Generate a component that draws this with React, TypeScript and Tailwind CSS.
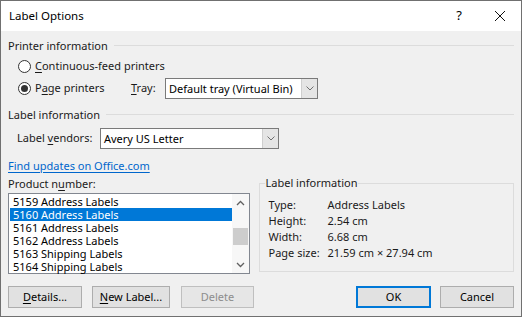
import React from "react";

const FONT = { fontFamily: '"Noto Sans", "Open Sans", sans-serif' };

function U({ children }: { children: React.ReactNode }) {
  return <span className="underline underline-offset-2">{children}</span>;
}

function Radio({ checked }: { checked?: boolean }) {
  return (
    <span className="flex h-[13px] w-[13px] shrink-0 items-center justify-center rounded-full border border-[#333] bg-white">
      {checked && <span className="h-[7px] w-[7px] rounded-full bg-[#333]" />}
    </span>
  );
}

function Chevron({ up }: { up?: boolean }) {
  return (
    <svg width="9" height="6" viewBox="0 0 9 6" className="shrink-0">
      <path
        d={up ? "M1 5 L4.5 1.5 L8 5" : "M1 1 L4.5 4.5 L8 1"}
        fill="none"
        stroke="#606060"
        strokeWidth="1.3"
      />
    </svg>
  );
}

function Combo({ value, width }: { value: string; width: string }) {
  return (
    <div className={`flex h-[21px] items-stretch border border-[#7a7a7a] bg-white ${width}`}>
      <span className="flex-1 whitespace-nowrap pl-[3px] leading-[19px] text-black">{value}</span>
      <span className="flex w-[16px] items-center justify-center border-l border-[#cfcfcf] bg-[#e5e5e5]">
        <svg width="8" height="5" viewBox="0 0 8 5">
          <path d="M0.5 0.5 L4 4 L7.5 0.5" fill="none" stroke="#707070" strokeWidth="1" />
        </svg>
      </span>
    </div>
  );
}

function Btn({
  children,
  width,
  primary,
  disabled,
}: {
  children: React.ReactNode;
  width: string;
  primary?: boolean;
  disabled?: boolean;
}) {
  return (
    <div
      className={`flex h-[22px] items-center justify-center whitespace-nowrap ${width} ${
        primary
          ? "border-2 border-[#0078d7] bg-[#e1e1e1] text-black"
          : disabled
          ? "border border-[#bfbfbf] bg-[#e6e6e6] text-[#8d8d8d]"
          : "border border-[#adadad] bg-[#e1e1e1] text-black"
      }`}
    >
      {children}
    </div>
  );
}

const PRODUCTS = [
  "5159 Address Labels",
  "5160 Address Labels",
  "5161 Address Labels",
  "5162 Address Labels",
  "5163 Shipping Labels",
  "5164 Shipping Labels",
];

const INFO: [string, string][] = [
  ["Type:", "Address Labels"],
  ["Height:", "2.54 cm"],
  ["Width:", "6.68 cm"],
  ["Page size:", "21.59 cm × 27.94 cm"],
];

export default function App() {
  return (
    <div className="h-[319px] w-[523px] bg-white text-[11px] text-[#1a1a1a]" style={FONT}>
      <div className="flex h-[317px] w-[522px] flex-col border border-[#707070]">
        {/* title bar */}
        <div className="flex h-[30px] shrink-0 items-center bg-white pl-[8px]">
          <span className="flex-1 text-[11.5px] text-black">Label Options</span>
          <span className="w-[20px] text-center text-[13px] text-black">?</span>
          <span className="ml-[25px] mr-[15px] flex w-[12px] justify-center">
            <svg width="12" height="12" viewBox="0 0 12 12">
              <path d="M1 1 L11 11 M11 1 L1 11" stroke="#111" strokeWidth="1" />
            </svg>
          </span>
        </div>

        {/* body */}
        <div className="flex flex-1 flex-col whitespace-nowrap bg-[#f0f0f0] pl-[7px] pr-[7px]">
          <div className="mt-[6px] flex h-[16px] items-center gap-[6px]">
            <span className="leading-none">Printer information</span>
            <span className="h-px flex-1 bg-[#dcdcdc]" />
          </div>

          <div className="mt-[3px] flex h-[20px] items-center pl-[10px]">
            <Radio />
            <span className="ml-[4px]">
              <U>C</U>ontinuous-feed printers
            </span>
          </div>

          <div className="mt-[2px] flex h-[21px] items-center pl-[10px]">
            <Radio checked />
            <span className="ml-[4px] w-[96px]">
              P<U>a</U>ge printers
            </span>
            <span className="w-[34px]">
              <U>T</U>ray:
            </span>
            <Combo value="Default tray (Virtual Bin)" width="w-[153px]" />
          </div>

          <div className="mt-[7px] flex h-[16px] items-center gap-[6px]">
            <span className="leading-none">Label information</span>
            <span className="h-px flex-1 bg-[#dcdcdc]" />
          </div>

          <div className="mt-[6px] flex h-[21px] items-center pl-[9px]">
            <span className="w-[83px]">
              Label <U>v</U>endors:
            </span>
            <Combo value="Avery US Letter" width="w-[179px]" />
          </div>

          <div className="mt-[9px] flex h-[16px] items-center">
            <span className="text-[#0066cc] underline underline-offset-2">Find updates on Office.com</span>
          </div>

          <div className="flex">
            <div className="flex w-[242px] flex-col">
              <div className="mt-[2px] flex h-[16px] items-center">
                Product n<U>u</U>mber:
              </div>
              <div className="mt-px flex h-[81px] border border-[#828790] bg-white">
                <div className="flex flex-1 flex-col pl-px pt-px">
                  {PRODUCTS.map((p, i) => (
                    <div
                      key={p}
                      className={`h-[13px] pl-[3px] leading-[13px] ${
                        i === 1 ? "bg-[#0078d7] text-white" : "text-black"
                      }`}
                    >
                      {p}
                    </div>
                  ))}
                </div>
                <div className="flex w-[17px] flex-col items-center bg-[#f7f7f7]">
                  <div className="flex h-[17px] items-center justify-center">
                    <Chevron up />
                  </div>
                  <div className="mt-[17px] h-[17px] w-[15px] bg-[#cdcdcd]" />
                  <div className="flex-1" />
                  <div className="flex h-[17px] items-center justify-center">
                    <Chevron />
                  </div>
                </div>
              </div>
            </div>

            <div className="ml-[9px] mt-[9px] flex h-[89px] w-[256px] flex-col border border-[#dcdcdc]">
              <div className="-mt-[9px] ml-[5px] h-[16px] w-fit bg-[#f0f0f0] px-px leading-[16px]">
                Label information
              </div>
              <div className="mt-[6px] flex flex-col pl-[9px]">
                {INFO.map(([k, v]) => (
                  <div key={k} className="flex h-[16px] items-center">
                    <span className="w-[59px]">{k}</span>
                    <span>{v}</span>
                  </div>
                ))}
              </div>
            </div>
          </div>

          <div className="mt-[12px] flex items-center">
            <Btn width="w-[74px]">
              <U>D</U>etails...
            </Btn>
            <span className="ml-[10px]">
              <Btn width="w-[78px]">
                <U>N</U>ew Label...
              </Btn>
            </span>
            <span className="ml-[11px]">
              <Btn width="w-[73px]" disabled>
                Delete
              </Btn>
            </span>
            <span className="flex-1" />
            <Btn width="w-[75px]" primary>
              OK
            </Btn>
            <span className="ml-[9px]">
              <Btn width="w-[74px]">Cancel</Btn>
            </span>
          </div>
        </div>
      </div>
    </div>
  );
}
